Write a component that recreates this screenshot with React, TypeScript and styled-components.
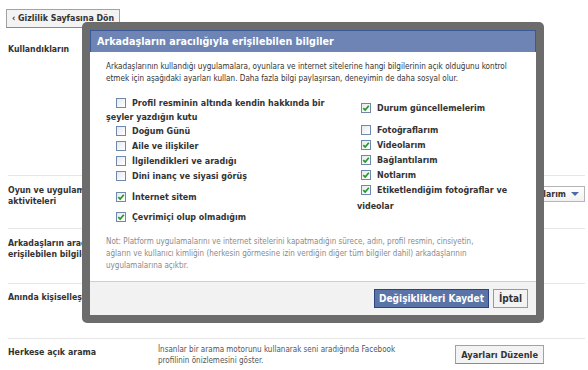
import React from 'react'
import styled, { createGlobalStyle } from 'styled-components'

const FONT = `'DejaVu Sans Condensed', 'DejaVu Sans', sans-serif`

const GlobalStyle = createGlobalStyle`
  html, body {
    margin: 0;
    padding: 0;
    background: #fff;
  }
  body {
    font-family: ${FONT};
    font-stretch: condensed;
    color: #333;
  }
  * {
    box-sizing: border-box;
  }
`

const Page = styled.div`
  position: relative;
  width: 588px;
  height: 370px;
  overflow: hidden;
  background: #fff;
`

const TopBar = styled.div`
  height: 30px;
  padding: 6px 0 0 6px;
`

type GrayButtonProps = { size?: number; offset?: number }

const GrayButton = styled.button<GrayButtonProps>`
  height: 19px;
  padding: 0 5px;
  border: 1px solid #a2a2a2;
  border-bottom-color: #8a8a8a;
  background: #f3f3f3;
  font-family: ${FONT};
  font-stretch: condensed;
  font-weight: bold;
  font-size: ${(p) => p.size || 8.8}px;
  color: #333;
  margin-right: ${(p) => p.offset || 0}px;
  white-space: nowrap;
  cursor: pointer;
`

const Rows = styled.div`
  margin: 0 3px 0 8px;
`

type RowProps = { h: number; pt: number; first?: boolean }

const Row = styled.div<RowProps>`
  display: grid;
  grid-template-columns: 150px 1fr auto;
  align-items: start;
  height: ${(p) => p.h}px;
  padding-top: ${(p) => p.pt}px;
  border-top: ${(p) => (p.first ? 'none' : '1px solid #e6e6e6')};
`

const Label = styled.div<{ mt?: number }>`
  font-weight: bold;
  font-size: 8.7px;
  line-height: 11px;
  color: #333;
  white-space: nowrap;
  margin-top: ${(p) => p.mt || 0}px;
`

const BigLabel = styled(Label)`
  font-size: 8.8px;
`

const Desc = styled.div`
  font-size: 8px;
  line-height: 11px;
  color: #555;
  margin-top: -1px;
`

const SelectButton = styled.button`
  display: flex;
  align-items: center;
  gap: 5px;
  height: 16px;
  margin-top: 1px;
  padding: 0 5px;
  border: 1px solid #b5b5b5;
  background: linear-gradient(#fff, #f1f1f1);
  font-family: ${FONT};
  font-stretch: condensed;
  font-weight: bold;
  font-size: 8.7px;
  color: #333;
  cursor: pointer;
`

const Caret = styled.span`
  width: 0;
  height: 0;
  border-left: 4px solid transparent;
  border-right: 4px solid transparent;
  border-top: 4px solid #4e6aa5;
`

/* dialog */

const Dialog = styled.div`
  position: absolute;
  left: 82px;
  top: 22px;
  width: 462px;
  height: 301px;
  border: 8px solid rgba(80, 80, 80, 0.84);
  border-radius: 5px;
  display: flex;
  flex-direction: column;
  background: #fff;
`

const DialogHeader = styled.div`
  height: 22px;
  padding-left: 6px;
  background: #6d84b4;
  border: 1px solid #3b5998;
  border-bottom: none;
  color: #fff;
  font-weight: bold;
  font-size: 10.7px;
  line-height: 21px;
`

const DialogBody = styled.div`
  flex: 1;
  padding: 8px 8px 0 16px;
`

const Intro = styled.p`
  margin: 0;
  font-size: 8.1px;
  line-height: 12px;
  color: #333;
`

const Columns = styled.div`
  display: grid;
  grid-template-columns: 235px 165px;
  column-gap: 16px;
`

const Column = styled.div<{ indent: number }>`
  text-indent: ${(p) => p.indent}px;
`

const Item = styled.div<{ mt?: number; lh?: number }>`
  margin-top: ${(p) => p.mt || 0}px;
  font-weight: bold;
  font-size: 8.9px;
  line-height: ${(p) => p.lh || 15}px;
  color: #333;
`

const Box = styled.span`
  display: inline-block;
  width: 10px;
  height: 10px;
  margin-right: 6px;
  vertical-align: -2px;
  text-indent: 0;
  border: 1px solid #6f89ad;
  background: linear-gradient(135deg, #e6e9ee, #fff);

  svg {
    display: block;
  }
`

const Note = styled.p`
  margin: 11px 0 0;
  font-size: 8px;
  line-height: 12px;
  color: #8a8a8a;
`

const DialogFooter = styled.div`
  height: 34px;
  display: flex;
  justify-content: flex-end;
  align-items: flex-start;
  gap: 4px;
  padding: 7px 8px 0 0;
  background: #f2f2f2;
  border-top: 1px solid #cfcfcf;
`

const SaveButton = styled.button`
  height: 19px;
  width: 115px;
  padding: 0;
  border: 1px solid #29447e;
  background: #5b74a8;
  color: #fff;
  font-family: ${FONT};
  font-stretch: condensed;
  font-weight: bold;
  font-size: 10px;
  cursor: pointer;
`

const CancelButton = styled(SaveButton)`
  width: 35px;
  border-color: #999;
  background: #f3f3f3;
  color: #333;
`

const Check = ({ on }: { on?: boolean }) => (
  <Box>
    {on && (
      <svg width="8" height="8" viewBox="0 0 8 8">
        <path d="M1.3 4.2 L3.2 6.1 L6.8 1.8" fill="none" stroke="#1f9a24" strokeWidth="1.7" />
      </svg>
    )}
  </Box>
)

type CheckItem = { text: string; on?: boolean; mt?: number; lh?: number }

const leftItems: CheckItem[] = [
  { text: 'Profil resminin altında kendin hakkında bir şeyler yazdığın kutu', lh: 13.5, mt: 13 },
  { text: 'Doğum Günü' },
  { text: 'Aile ve ilişkiler' },
  { text: 'İlgilendikleri ve aradığı' },
  { text: 'Dini inanç ve siyasi görüş' },
  { text: 'İnternet sitem', on: true, mt: 6 },
  { text: 'Çevrimiçi olup olmadığım', on: true, mt: 5 },
]

const rightItems: CheckItem[] = [
  { text: 'Durum güncellemelerim', on: true, mt: 17 },
  { text: 'Fotoğraflarım', mt: 7 },
  { text: 'Videolarım', on: true },
  { text: 'Bağlantılarım', on: true },
  { text: 'Notlarım', on: true },
  { text: 'Etiketlendiğim fotoğraflar ve videolar', on: true, lh: 15.5 },
]

const ItemList = ({ items }: { items: CheckItem[] }) => (
  <>
    {items.map((it) => (
      <Item key={it.text} mt={it.mt} lh={it.lh}>
        <Check on={it.on} />
        {it.text}
      </Item>
    ))}
  </>
)

export default function App() {
  return (
    <Page>
      <GlobalStyle />
      <TopBar>
        <GrayButton>‹ Gizlilik Sayfasına Dön</GrayButton>
      </TopBar>

      <Rows>
        <Row first h={145} pt={14}>
          <Label>Kullandıkların</Label>
        </Row>
        <Row h={53} pt={9}>
          <Label>
            Oyun ve uygulama
            <br />
            aktiviteleri
          </Label>
          <div />
          <SelectButton>
            Arkadaşlarım <Caret />
          </SelectButton>
        </Row>
        <Row h={55} pt={9}>
          <Label>
            Arkadaşların aracılığıyla
            <br />
            erişilebilen bilgiler
          </Label>
        </Row>
        <Row h={55} pt={8}>
          <Label>Anında kişiselleştirme</Label>
        </Row>
        <Row h={40} pt={6}>
          <BigLabel mt={2}>Herkese açık arama</BigLabel>
          <Desc>
            İnsanlar bir arama motorunu kullanarak seni aradığında Facebook
            <br />
            profilinin önizlemesini göster.
          </Desc>
          <GrayButton size={9.2} offset={41}>
            Ayarları Düzenle
          </GrayButton>
        </Row>
      </Rows>

      <Dialog>
        <DialogHeader>Arkadaşların aracılığıyla erişilebilen bilgiler</DialogHeader>
        <DialogBody>
          <Intro>
            Arkadaşlarının kullandığı uygulamalara, oyunlara ve internet sitelerine hangi bilgilerinin açık olduğunu kontrol
            <br />
            etmek için aşağıdaki ayarları kullan. Daha fazla bilgi paylaşırsan, deneyimin de daha sosyal olur.
          </Intro>
          <Columns>
            <Column indent={10}>
              <ItemList items={leftItems} />
            </Column>
            <Column indent={4}>
              <ItemList items={rightItems} />
            </Column>
          </Columns>
          <Note>
            Not: Platform uygulamalarını ve internet sitelerini kapatmadığın sürece, adın, profil resmin, cinsiyetin,
            <br />
            ağların ve kullanıcı kimliğin (herkesin görmesine izin verdiğin diğer tüm bilgiler dahil) arkadaşlarının
            <br />
            uygulamalarına açıktır.
          </Note>
        </DialogBody>
        <DialogFooter>
          <SaveButton>Değişiklikleri Kaydet</SaveButton>
          <CancelButton>İptal</CancelButton>
        </DialogFooter>
      </Dialog>
    </Page>
  )
}
